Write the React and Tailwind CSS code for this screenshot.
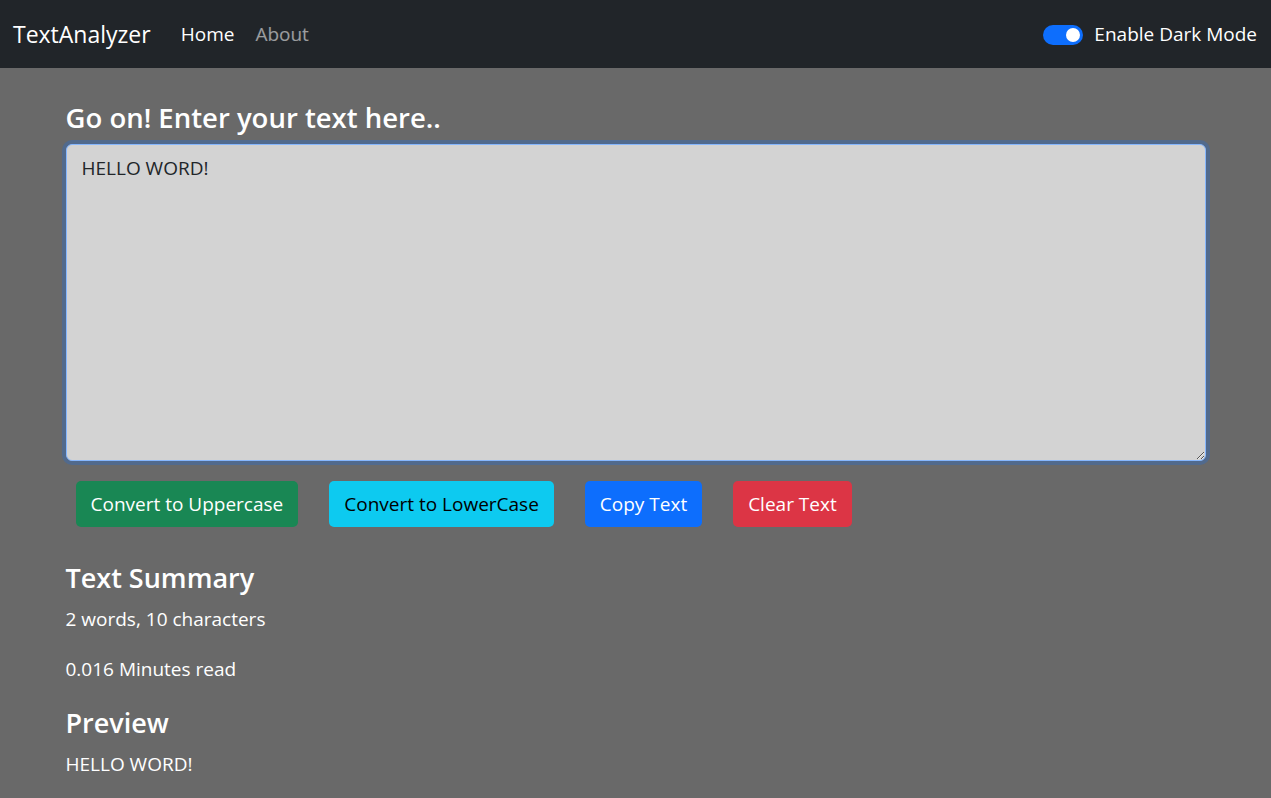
import { useState } from "react";

export default function App() {
  const [text, setText] = useState("HELLO WORD!");
  const [dark, setDark] = useState(true);

  const words = text.split(/\s+/).filter((w) => w.length !== 0).length;

  return (
    <div
      className="min-h-screen bg-[#696969] text-white"
      style={{ fontFamily: "'Open Sans', sans-serif" }}
    >
      {/* Navbar */}
      <nav className="h-[68px] bg-[#212529] flex items-center justify-between pl-[13px] pr-[14px] pt-[1px]">
        <div className="flex items-center">
          <a className="text-[23px] text-white mr-[30px]">TextAnalyzer</a>
          <a className="text-[19px] text-white mr-[21px]">Home</a>
          <a className="text-[19px] text-white/55">About</a>
        </div>
        <label className="flex items-center gap-[11px] text-[19px] text-white">
          <button
            onClick={() => setDark(!dark)}
            className="w-[40px] h-[20px] rounded-full bg-[#0d6efd] flex items-center justify-end px-[3px]"
          >
            <span className="w-[14px] h-[14px] rounded-full bg-white"></span>
          </button>
          Enable Dark Mode
        </label>
      </nav>

      {/* Main */}
      <div className="w-[1140px] mx-auto pt-[33px] pb-[20px]">
        <h3 className="text-[27.5px] font-semibold leading-[33px] mb-[10px]">
          Go on! Enter your text here..
        </h3>
        <textarea
          value={text}
          onChange={(e) => setText(e.target.value)}
          className="block w-full h-[317px] bg-[#d3d3d3] text-[#212529] text-[19px] leading-[1.5] px-[15px] py-[9px] rounded-[6px] border border-[#86b7fe] shadow-[0_0_0_4px_rgba(13,110,253,0.25)] outline-none resize-y"
        />

        <div className="flex mt-[20px] ml-[10px] gap-[31px]">
          <button className="h-[46px] px-[15px] rounded-[5px] bg-[#198754] text-white text-[19px]">
            Convert to Uppercase
          </button>
          <button className="h-[46px] px-[15px] rounded-[5px] bg-[#0dcaf0] text-black text-[19px]">
            Convert to LowerCase
          </button>
          <button className="h-[46px] px-[15px] rounded-[5px] bg-[#0d6efd] text-white text-[19px]">
            Copy Text
          </button>
          <button className="h-[46px] px-[15px] rounded-[5px] bg-[#dc3545] text-white text-[19px]">
            Clear Text
          </button>
        </div>

        <h4 className="text-[27px] font-semibold leading-[33px] mt-[34px] mb-[11px]">
          Text Summary
        </h4>
        <p className="text-[19px] leading-[1.5] mb-[21px]">
          {words} words, {text.replace(/\s/g, "").length} characters
        </p>
        <p className="text-[19px] leading-[1.5] mb-[23px]">
          {(0.008 * words).toFixed(3)} Minutes read
        </p>
        <h4 className="text-[27px] font-semibold leading-[33px] mb-[11px]">
          Preview
        </h4>
        <p className="text-[19px] leading-[1.5]">{text}</p>
      </div>
    </div>
  );
}
